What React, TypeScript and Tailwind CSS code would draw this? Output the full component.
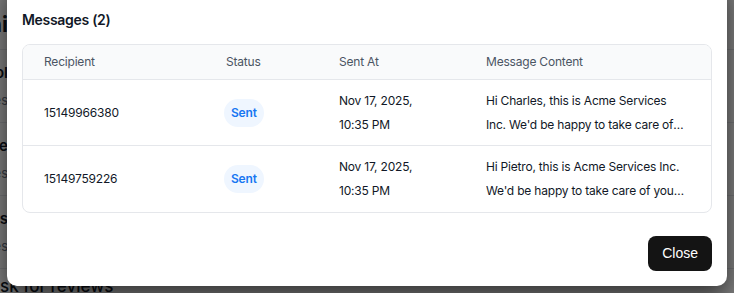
import React from "react";

const rows = [
  {
    recipient: "15149966380",
    date: "Nov 17, 2025,",
    time: "10:35 PM",
    msg: "Hi Charles, this is Acme Services Inc. We'd be happy to take care of your lawn this season.",
  },
  {
    recipient: "15149759226",
    date: "Nov 17, 2025,",
    time: "10:35 PM",
    msg: "Hi Pietro, this is Acme Services Inc. We'd be happy to take care of your lawn this season.",
  },
];

const bgItems = [
  { title: "Campaign tool", sub: "Sends messages" },
  { title: "Welcome note", sub: "Sends messages" },
  { title: "Reach past clients", sub: "Sends messages" },
];

export default function App() {
  return (
    <div
      className="relative w-[734px] h-[293px] overflow-hidden bg-white"
      style={{ fontFamily: "Inter, 'Noto Sans', sans-serif" }}
    >
      {/* background page */}
      <div className="flex flex-col text-[#111827]">
        <div className="h-[50px] flex items-center border-b border-gray-200">
          <span className="w-[8px] flex justify-end overflow-hidden whitespace-nowrap text-[22px] font-bold">
            <span>Campaigni</span>
          </span>
        </div>
        {bgItems.map((it, i) => (
          <div
            key={i}
            className="h-[73px] flex flex-col justify-center gap-[6px] border-b border-gray-200"
          >
            <span className="w-[8px] flex justify-end overflow-hidden whitespace-nowrap text-[15px] font-semibold">
              <span>{it.title}</span>
            </span>
            <span className="w-[8px] flex justify-end overflow-hidden whitespace-nowrap text-[13px] text-gray-500">
              <span>{it.sub}</span>
            </span>
          </div>
        ))}
        <div className="h-[30px] flex items-end ml-[-12px]">
          <span className="text-[17px] font-medium">Ask for reviews</span>
        </div>
      </div>

      {/* overlay */}
      <div className="absolute inset-0 bg-black/50" />

      {/* modal */}
      <div className="absolute left-[7px] top-[-20px] w-[720px] h-[306px] bg-white rounded-[10px] shadow-[0_10px_25px_rgba(0,0,0,0.6)] px-[15px] pt-[30px] pb-[15px] flex flex-col">
        <h2 className="text-[14px] font-semibold text-[#111827] leading-[20px] tracking-[-0.3px]">Messages (2)</h2>
        <div className="mt-[14px] border border-gray-200 rounded-[8px] overflow-hidden tracking-[-0.2px]">
          <div className="flex h-[35px] items-center bg-[#f9fafb] border-b border-gray-200 text-[12px] text-[#4b5563]">
            <div className="w-[182px] pl-[21px]">Recipient</div>
            <div className="w-[113px] pl-[21px]">Status</div>
            <div className="w-[147px] pl-[21px]">Sent At</div>
            <div className="flex-1 pl-[21px]">Message Content</div>
          </div>
          {rows.map((r, i) => (
            <div
              key={i}
              className={`flex h-[66px] items-center text-[12px] text-[#111827] ${i === 0 ? "border-b border-gray-200" : ""}`}
            >
              <div className="w-[182px] pl-[21px]">{r.recipient}</div>
              <div className="w-[113px] pl-[19px]">
                <span className="inline-flex h-[28px] px-[7px] items-center rounded-full bg-[#eff6ff] text-[#1877f2] font-semibold text-[12px]">
                  Sent
                </span>
              </div>
              <div className="w-[147px] pl-[21px] leading-[24px]">
                <div>{r.date}</div>
                <div>{r.time}</div>
              </div>
              <div className="flex-1 pl-[21px] pr-[20px] leading-[24px]">
                <div className="w-[202px] line-clamp-2">{r.msg}</div>
              </div>
            </div>
          ))}
        </div>
        <div className="mt-auto flex justify-end">
          <button
            className="h-[35px] px-[14px] rounded-[8px] bg-[#141414] text-white text-[14px]"
            style={{ fontFamily: "'Liberation Sans', Arial, sans-serif" }}
          >
            Close
          </button>
        </div>
      </div>
    </div>
  );
}
